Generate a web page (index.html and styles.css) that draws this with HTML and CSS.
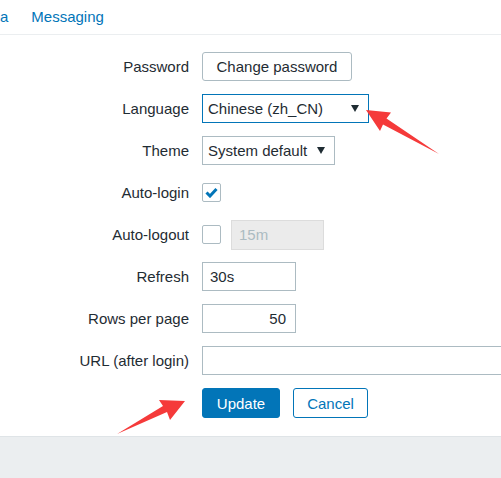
FILE: index.html
```html
<!DOCTYPE html>
<html>
<head>
<meta charset="utf-8">
<link rel="stylesheet" href="styles.css">
</head>
<body>
<div class="page">
  <nav class="tabs">
    <a class="tab">a</a>
    <a class="tab">Messaging</a>
  </nav>
  <form class="form">
    <label class="lbl">Password</label>
    <div class="ctl"><button type="button" class="btn btn-alt">Change password</button></div>

    <label class="lbl">Language</label>
    <div class="ctl"><div class="select select-focus w-lang"><span>Chinese (zh_CN)</span><span class="caret"></span></div></div>

    <label class="lbl">Theme</label>
    <div class="ctl"><div class="select w-theme"><span>System default</span><span class="caret"></span></div></div>

    <label class="lbl">Auto-login</label>
    <div class="ctl"><span class="check">
      <svg width="13" height="11" viewBox="0 0 13 11"><path d="M1.5 5.5 L5 9 L11.5 2" fill="none" stroke="#0275b8" stroke-width="3"/></svg>
    </span></div>

    <label class="lbl">Auto-logout</label>
    <div class="ctl ctl-gap"><span class="check"></span><div class="input input-disabled w-short">15m</div></div>

    <label class="lbl">Refresh</label>
    <div class="ctl"><div class="input w-short2">30s</div></div>

    <label class="lbl">Rows per page</label>
    <div class="ctl"><div class="input w-short2 right">50</div></div>

    <label class="lbl">URL (after login)</label>
    <div class="ctl"><div class="input w-long"></div></div>

    <span></span>
    <div class="ctl ctl-btns"><button type="button" class="btn btn-primary">Update</button><button type="button" class="btn btn-outline">Cancel</button></div>
  </form>
  <footer class="footer"></footer>

  <svg class="arrows" width="501" height="478" viewBox="0 0 501 478">
    <polygon fill="#f53a3a" points="366,110 391,112.5 386.5,118.4 439,154 383,124.4 380,131"/>
    <polygon fill="#f53a3a" points="185,401 170,420 167,412 117,434 163,406 159,400"/>
  </svg>
</div>
</body>
</html>
```

FILE: styles.css
```css
html, body {
  margin: 0;
  padding: 0;
  overflow: hidden;
}
body {
  width: 501px;
  height: 478px;
  font-family: "Liberation Sans", Arial, sans-serif;
  font-size: 15px;
  color: #1f2c33;
  background: #ffffff;
}
.page {
  position: relative;
  width: 501px;
  height: 478px;
  display: flex;
  flex-direction: column;
  overflow: hidden;
}
.tabs {
  height: 33px;
  border-bottom: 1px solid #ebeef0;
  display: flex;
  align-items: center;
  gap: 23px;
  padding-bottom: 1px;
  box-sizing: content-box;
}
.tab {
  color: #0275b8;
  text-decoration: none;
  line-height: 18px;
}
.form {
  display: grid;
  grid-template-columns: 189px 1fr;
  column-gap: 13px;
  row-gap: 13px;
  grid-auto-rows: 29px;
  padding-top: 17px;
}
.lbl {
  text-align: right;
  line-height: 29px;
  white-space: nowrap;
}
.ctl {
  display: flex;
  align-items: center;
  height: 29px;
  min-width: 0;
}
.ctl-gap {
  gap: 10px;
}
.ctl-btns {
  gap: 13px;
  height: 30px;
}
.btn {
  font-family: "Liberation Sans", Arial, sans-serif;
  font-size: 15px;
  height: 29px;
  border-radius: 3px;
  padding: 0;
  box-sizing: border-box;
  white-space: nowrap;
  cursor: pointer;
}
.btn-alt {
  width: 150px;
  background: #ffffff;
  color: #1f2c33;
  border: 1px solid #acbbc2;
}
.btn-primary {
  width: 78px;
  height: 30px;
  background: #0275b8;
  color: #ffffff;
  border: 1px solid #0275b8;
}
.btn-outline {
  width: 75px;
  height: 30px;
  background: #ffffff;
  color: #0275b8;
  border: 1px solid #0275b8;
}
.select {
  height: 29px;
  box-sizing: border-box;
  border: 1px solid #acbbc2;
  display: flex;
  align-items: center;
  justify-content: space-between;
  padding: 0 9px 0 5px;
  background: #ffffff;
}
.select-focus {
  border-color: #0275b8;
}
.w-lang { width: 167px; }
.w-theme { width: 133px; }
.caret {
  width: 0;
  height: 0;
  border-left: 4px solid transparent;
  border-right: 4px solid transparent;
  border-top: 7px solid #1f2c33;
}
.check {
  width: 19px;
  height: 19px;
  box-sizing: border-box;
  border: 1px solid #acbbc2;
  border-radius: 2px;
  background: #ffffff;
  display: flex;
  align-items: center;
  justify-content: center;
}
.input {
  height: 29px;
  box-sizing: border-box;
  border: 1px solid #acbbc2;
  padding: 0 7px;
  display: flex;
  align-items: center;
  background: #ffffff;
}
.input-disabled {
  background: #ebebeb;
  color: #acbbc2;
  border-color: #dcdcdc;
  height: 30px;
}
.w-short { width: 93px; }
.w-short2 { width: 94px; }
.w-long { width: 400px; flex-shrink: 0; }
.right { justify-content: flex-end; padding-right: 9px; }
.footer {
  margin-top: 19px;
  flex: 1;
  background: #ebeef0;
  border-top: 1px solid #dfe4e7;
}
.arrows {
  position: absolute;
  top: 0;
  left: 0;
  pointer-events: none;
}
```
